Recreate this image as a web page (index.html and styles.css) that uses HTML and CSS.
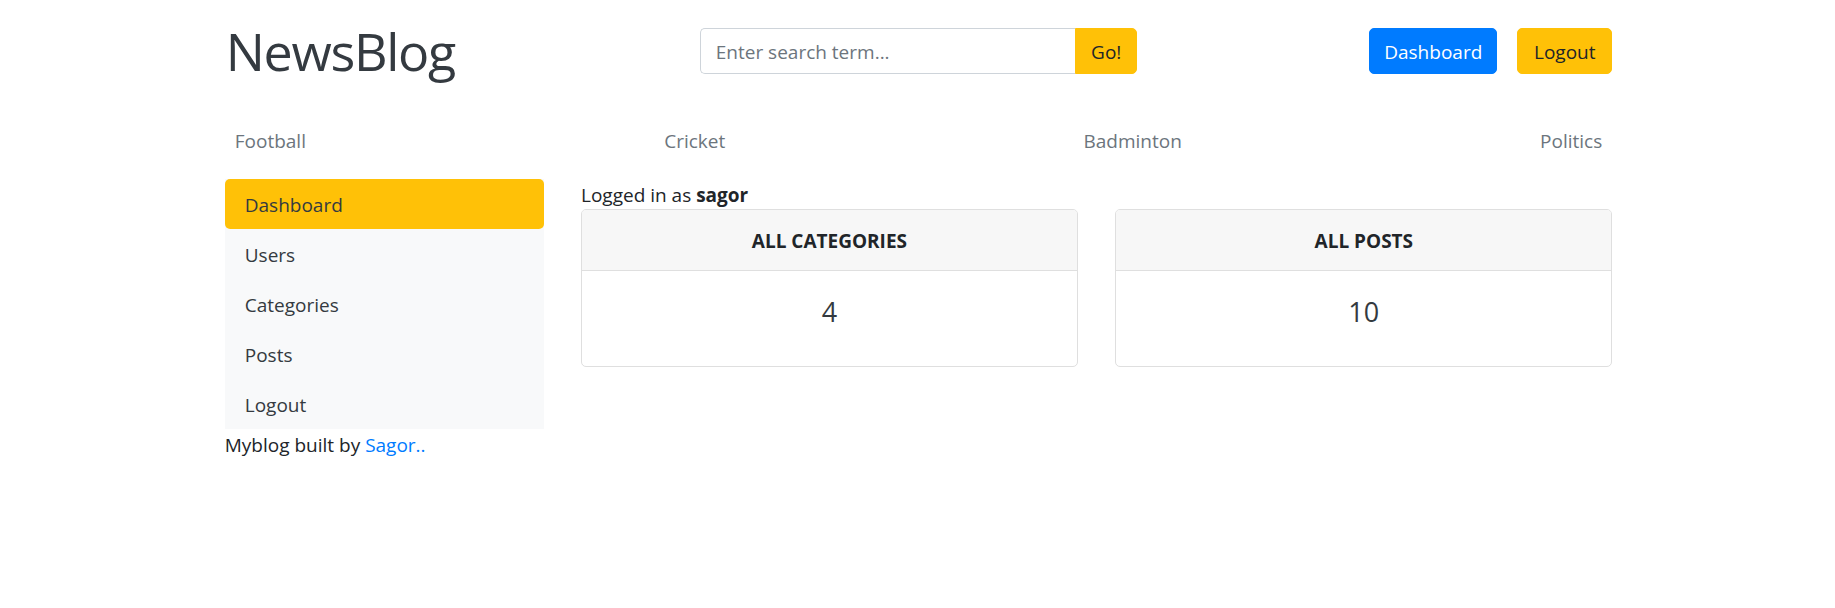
FILE: index.html
```html
<!DOCTYPE html>
<html lang="en">
<head>
<meta charset="utf-8">
<title>NewsBlog</title>
<link rel="stylesheet" href="styles.css">
</head>
<body>
<div class="container">
  <header class="header">
    <h1 class="brand">NewsBlog</h1>
    <form class="search">
      <input class="search-input" type="text" placeholder="Enter search term...">
      <button class="btn btn-warning btn-go" type="button">Go!</button>
    </form>
    <div class="actions">
      <a class="btn btn-primary" href="#">Dashboard</a>
      <a class="btn btn-warning" href="#">Logout</a>
    </div>
  </header>

  <nav class="topnav">
    <a class="topnav-link" href="#">Football</a>
    <a class="topnav-link" href="#">Cricket</a>
    <a class="topnav-link" href="#">Badminton</a>
    <a class="topnav-link" href="#">Politics</a>
  </nav>

  <div class="layout">
    <aside class="side">
      <ul class="sidenav">
        <li><a class="sidenav-link active" href="#">Dashboard</a></li>
        <li><a class="sidenav-link" href="#">Users</a></li>
        <li><a class="sidenav-link" href="#">Categories</a></li>
        <li><a class="sidenav-link" href="#">Posts</a></li>
        <li><a class="sidenav-link" href="#">Logout</a></li>
      </ul>
      <p class="footer-text">Myblog built by <a class="link" href="#">Sagor..</a></p>
    </aside>
    <main class="main">
      <p class="logged">Logged in as <b>sagor</b></p>
      <div class="cards">
        <div class="card">
          <div class="card-header">ALL CATEGORIES</div>
          <div class="card-body"><h4 class="count">4</h4></div>
        </div>
        <div class="card">
          <div class="card-header">ALL POSTS</div>
          <div class="card-body"><h4 class="count">10</h4></div>
        </div>
      </div>
    </main>
  </div>
</div>
</body>
</html>
```

FILE: styles.css
```css
* { box-sizing: border-box; }

html, body {
  margin: 0;
  padding: 0;
  background: #fff;
}

body {
  font-family: "Open Sans", "Noto Sans", sans-serif;
  font-size: 19px;
  line-height: 30px;
  color: #212529;
}

a { text-decoration: none; }

.container {
  width: 1387.5px;
  margin: 0 auto;
  position: relative;
  left: 1px;
}

/* Header */
.header {
  display: grid;
  grid-template-columns: 1fr 1fr 1fr;
  column-gap: 37.5px;
  align-items: center;
  padding-top: 28px;
}

.brand {
  margin: 0;
  font-size: 52px;
  line-height: 46px;
  font-weight: 500;
  letter-spacing: -1.3px;
  color: #343a40;
  padding-left: 1px;
}

.search {
  display: flex;
  margin: 0;
  height: 46px;
}

.search-input {
  flex: 1;
  min-width: 0;
  height: 46px;
  padding: 8px 15px 6px;
  border: 1px solid #ced4da;
  border-right: 0;
  border-radius: 5px 0 0 5px;
  font-family: inherit;
  font-size: 19px;
  color: #495057;
  outline: none;
}

.search-input::placeholder { color: #6c757d; opacity: 1; }

.btn {
  display: inline-flex;
  align-items: center;
  justify-content: center;
  height: 46px;
  padding: 2px 15px 0;
  border: 1px solid transparent;
  border-radius: 5px;
  font-family: inherit;
  font-size: 19px;
  line-height: 30px;
  cursor: pointer;
}

.btn-primary { background: #007bff; border-color: #007bff; color: #fff; }
.btn-warning { background: #ffc107; border-color: #ffc107; color: #212529; }

.btn-go {
  width: 62px;
  padding: 2px 0 0;
  border-radius: 0 5px 5px 0;
}

.actions {
  display: flex;
  justify-content: flex-end;
  gap: 20px;
}

.actions .btn-primary { width: 128px; }
.actions .btn-warning { width: 95px; }

/* Top nav */
.topnav {
  display: flex;
  justify-content: space-between;
  margin-top: 41px;
  margin-bottom: 14px;
}

.topnav-link {
  display: block;
  padding: 11px 10px 9px;
  color: #6c757d;
}

/* Layout */
.layout {
  display: grid;
  grid-template-columns: 318.75px 1fr;
  column-gap: 37.5px;
  align-items: start;
}

.sidenav {
  list-style: none;
  margin: 0;
  padding: 0;
  background: #f8f9fa;
}

.sidenav-link {
  display: block;
  padding: 11px 20px 9px;
  color: #343a40;
}

.sidenav-link.active {
  background: #ffc107;
  border-radius: 5px;
}

.footer-text {
  margin: 0;
  padding-top: 1px;
}

.link { color: #007bff; }

.logged {
  margin: 0;
  height: 30px;
  padding-top: 1px;
}

.logged b { font-weight: 700; }

.cards {
  display: grid;
  grid-template-columns: 1fr 1fr;
  column-gap: 37.5px;
}

.card {
  border: 1px solid #dfdfdf;
  border-radius: 5px;
  overflow: hidden;
  background: #fff;
}

.card-header {
  padding: 16px 25px 14px;
  background: #f7f7f7;
  border-bottom: 1px solid #dfdfdf;
  text-align: center;
  font-weight: 700;
  color: #212529;
}

.card-body {
  padding: 23px 25px 25px;
  text-align: center;
}

.count {
  margin: 0 0 11px;
  font-size: 27px;
  line-height: 36px;
  font-weight: 400;
  color: #343a40;
}
```
